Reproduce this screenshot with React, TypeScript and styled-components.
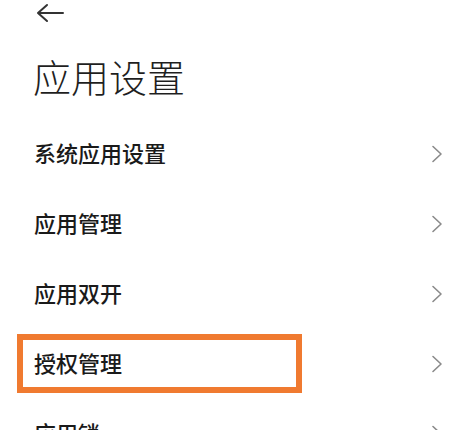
import React from "react"
import styled, { createGlobalStyle } from "styled-components"

const GlobalStyle = createGlobalStyle`
  html, body {
    margin: 0;
    padding: 0;
    background: #ffffff;
  }
  body {
    font-family: "Noto Sans CJK SC", "Noto Sans", sans-serif;
    color: #1a1a1a;
  }
`

const Page = styled.div`
  width: 475px;
  height: 430px;
  overflow: hidden;
  background: #ffffff;
`

const TopBar = styled.div`
  height: 24px;
  padding-left: 36px;
  display: flex;
  align-items: center;
`

const Title = styled.h1`
  margin: 30px 0 21px 33px;
  font-size: 38px;
  line-height: 44px;
  font-weight: 300;
  color: #1f1f1f;
`

const List = styled.div`
  display: flex;
  flex-direction: column;
`

const Row = styled.div`
  position: relative;
  height: 70px;
  padding: 0 32px 0 34px;
  display: flex;
  align-items: center;
  justify-content: space-between;
`

const Label = styled.span`
  font-size: 22px;
  line-height: 30px;
  margin-top: -4px;
  font-weight: 500;
  color: #1a1a1a;
`

const Highlight = styled.div`
  position: absolute;
  left: 17px;
  top: 5px;
  width: 285px;
  height: 59px;
  box-sizing: border-box;
  border: 6px solid #f07a30;
  pointer-events: none;
`

const BackArrow = () => (
  <svg width="28" height="24" viewBox="0 0 28 24" fill="none">
    <path d="M2 13H27M11 5L2 13L11 21" stroke="#333" strokeWidth="2" strokeLinecap="round" strokeLinejoin="round" />
  </svg>
)

const Chevron = () => (
  <svg width="12" height="18" viewBox="0 0 12 18" fill="none">
    <path d="M2 1.5L10 9L2 16.5" stroke="#8a8a8a" strokeWidth="1.6" strokeLinecap="round" strokeLinejoin="round" />
  </svg>
)

const items = [
  { label: "系统应用设置" },
  { label: "应用管理" },
  { label: "应用双开" },
  { label: "授权管理", marked: true },
  { label: "应用锁" },
]

const App = () => (
  <>
    <GlobalStyle />
    <Page>
      <TopBar>
        <BackArrow />
      </TopBar>
      <Title>应用设置</Title>
      <List>
        {items.map((item) => (
          <Row key={item.label}>
            <Label>{item.label}</Label>
            <Chevron />
            {item.marked && <Highlight />}
          </Row>
        ))}
      </List>
    </Page>
  </>
)

export default App
